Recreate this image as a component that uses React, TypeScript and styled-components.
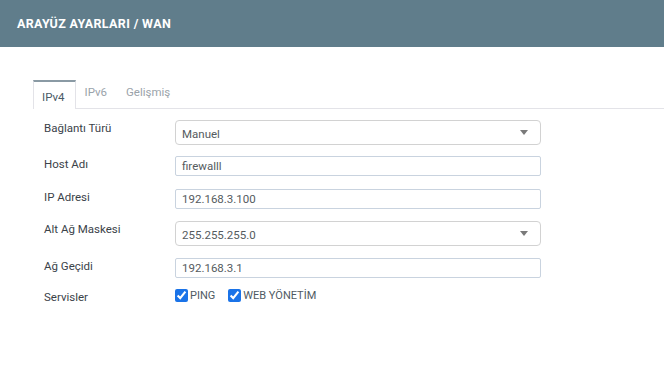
import styled, { createGlobalStyle } from 'styled-components';

const GlobalStyle = createGlobalStyle`
  html, body {
    margin: 0;
    padding: 0;
    background: #ffffff;
    font-family: Roboto, 'Liberation Sans', sans-serif;
  }
`;

const Page = styled.div`
  width: 664px;
  height: 372px;
  overflow: hidden;
  background: #fff;
`;

const TopBar = styled.header`
  height: 47px;
  background-color: #607d8b;
  display: flex;
  align-items: center;
  padding-left: 17px;
`;

const Title = styled.h1`
  margin: 0;
  font-size: 12.5px;
  font-weight: 700;
  color: #ffffff;
  letter-spacing: 0.35px;
`;

const Content = styled.div`
  padding: 33px 0 0 33px;
`;

const TabBar = styled.div`
  display: flex;
  align-items: flex-start;
  height: 28px;
  border-bottom: 1px solid #e3e3e8;
`;

const Tab = styled.div<{ $active?: boolean }>`
  height: 24px;
  padding: 5px 10px 0 9px;
  box-sizing: border-box;
  font-size: 11.5px;
  color: #9aa3aa;
  background: #fff;
  ${p =>
    p.$active &&
    `
    height: 29px;
    color: #4a5a66;
    border-top: 2px solid #8a9aa4;
    border-left: 1px solid #e3e3e8;
    border-right: 1px solid #e3e3e8;
    padding: 8px 10px 0 8px;
  `}
`;

const Form = styled.div`
  padding: 11px 0 0 11px;
  display: flex;
  flex-direction: column;
`;

const Row = styled.div<{ $gap: number }>`
  display: grid;
  grid-template-columns: 131px 366px;
  align-items: start;
  margin-bottom: ${p => p.$gap}px;
`;

const Label = styled.div`
  font-size: 11.5px;
  color: #3b4249;
  padding-top: 1px;
`;

const Select = styled.div`
  height: 25px;
  box-sizing: border-box;
  border: 1px solid #d2d2d2;
  border-radius: 4px;
  display: flex;
  align-items: center;
  justify-content: space-between;
  padding: 3px 12px 0 6px;
  font-size: 11.5px;
  color: #555b60;
`;

const Caret = styled.span`
  width: 0;
  height: 0;
  border-left: 4px solid transparent;
  border-right: 4px solid transparent;
  border-top: 5px solid #7a7a7a;
  margin-top: -3px;
`;

const Input = styled.div`
  height: 20px;
  box-sizing: border-box;
  border: 1px solid #c9d3df;
  border-radius: 2px;
  display: flex;
  align-items: center;
  padding: 0 6px;
  font-size: 11.5px;
  color: #555b60;
`;

const Checks = styled.div`
  display: flex;
  align-items: center;
  gap: 13px;
`;

const Check = styled.label`
  display: flex;
  align-items: center;
  font-size: 11px;
  color: #4f5a63;
  gap: 2px;
`;

const Box = styled.input`
  margin: 0;
  width: 13px;
  height: 13px;
  accent-color: #1a73e8;
`;

export default function App() {
  return (
    <Page>
      <GlobalStyle />
      <TopBar>
        <Title>ARAYÜZ AYARLARI / WAN</Title>
      </TopBar>
      <Content>
        <TabBar>
          <Tab $active>IPv4</Tab>
          <Tab>IPv6</Tab>
          <Tab>Gelişmiş</Tab>
        </TabBar>
        <Form>
          <Row $gap={11}>
            <Label>Bağlantı Türü</Label>
            <Select>
              Manuel
              <Caret />
            </Select>
          </Row>
          <Row $gap={13}>
            <Label>Host Adı</Label>
            <Input>firewalll</Input>
          </Row>
          <Row $gap={12}>
            <Label>IP Adresi</Label>
            <Input>192.168.3.100</Input>
          </Row>
          <Row $gap={12}>
            <Label>Alt Ağ Maskesi</Label>
            <Select>
              255.255.255.0
              <Caret />
            </Select>
          </Row>
          <Row $gap={11}>
            <Label>Ağ Geçidi</Label>
            <Input>192.168.3.1</Input>
          </Row>
          <Row $gap={0}>
            <Label>Servisler</Label>
            <Checks>
              <Check>
                <Box type="checkbox" defaultChecked />
                PING
              </Check>
              <Check>
                <Box type="checkbox" defaultChecked />
                WEB YÖNETİM
              </Check>
            </Checks>
          </Row>
        </Form>
      </Content>
    </Page>
  );
}
